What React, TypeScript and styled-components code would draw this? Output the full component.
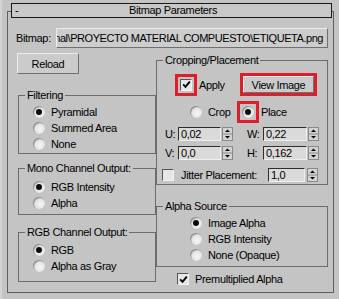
import React from 'react';
import styled, { createGlobalStyle } from 'styled-components';

const colors = {
  panel: '#c4c4c4',
  line: '#6c6c6c',
  frame: '#5e5e5e',
  hi: '#ececec',
  lo: '#707070',
  field: '#dadada',
  red: '#dc1f2b',
};

const GlobalStyle = createGlobalStyle`
  html, body {
    margin: 0;
    padding: 0;
    background: ${colors.panel};
  }
  body {
    font-family: 'Liberation Sans', Arial, sans-serif;
    font-size: 11px;
    letter-spacing: -0.35px;
    color: #000;
  }
  * { box-sizing: border-box; }
`;

const Page = styled.div`
  width: 339px;
  height: 299px;
  padding-left: 5px;
  border-left: 2px solid #d4d4d4;
  overflow: hidden;
`;

const Rollout = styled.div`
  margin-top: 11px;
  width: 327px;
  height: 282px;
  border: 1px solid ${colors.frame};
  display: flex;
  flex-direction: column;
`;

const TitleBar = styled.div`
  margin: -9px 1px 0 3px;
  height: 15px;
  border: 1px solid #1a1a1a;
  background: #c8c8c8;
  display: grid;
  grid-template-columns: 1fr auto 1fr;
  align-items: center;
  padding-left: 3px;
  line-height: 13px;
`;

const Body = styled.div`
  padding-left: 8px;
`;

const BitmapRow = styled.div`
  margin-top: 10px;
  height: 20px;
  display: flex;
  align-items: center;
`;

const RowLabel = styled.span`
  width: 40px;
`;

const PathField = styled.div`
  width: 272px;
  height: 20px;
  background: #cdcdcd;
  border: 1px solid;
  border-color: ${colors.hi} ${colors.lo} ${colors.lo} ${colors.hi};
  display: flex;
  justify-content: flex-end;
  align-items: center;
  padding-right: 4px;
  overflow: hidden;
  white-space: nowrap;
  letter-spacing: -0.45px;
`;

const Columns = styled.div`
  display: flex;
  margin-top: 5px;
`;

const LeftCol = styled.div`
  width: 140px;
  display: flex;
  flex-direction: column;
`;

const RightCol = styled.div`
  width: 172px;
  display: flex;
  flex-direction: column;
`;

const Button = styled.button<{ $w: number; $h: number }>`
  width: ${(p) => p.$w}px;
  height: ${(p) => p.$h}px;
  padding: 0;
  font: inherit;
  letter-spacing: inherit;
  color: #000;
  background: #cbcbcb;
  border: 1px solid;
  border-color: ${colors.hi} ${colors.lo} ${colors.lo} ${colors.hi};
  display: block;
`;

const ReloadButton = styled(Button)`
  margin-left: 1px;
`;

const Group = styled.fieldset<{ $mt: number; $pt: number; $pb: number; $ml?: number }>`
  margin: ${(p) => p.$mt}px 0 0 ${(p) => p.$ml ?? 0}px;
  padding: ${(p) => p.$pt}px 0 ${(p) => p.$pb}px 0;
  border: 1px solid ${colors.line};
  min-width: 0;
`;

const Legend = styled.legend`
  margin-left: 6px;
  padding: 0 2px;
  line-height: 12px;
  font-size: 11px;
`;

const Option = styled.label<{ $indent: number }>`
  display: flex;
  align-items: center;
  gap: 6px;
  height: 16px;
  padding-left: ${(p) => p.$indent}px;
`;

const RadioDot = styled.span<{ $on?: boolean }>`
  position: relative;
  flex: none;
  width: 12px;
  height: 12px;
  border-radius: 50%;
  background: radial-gradient(circle at 60% 60%, #f6f6f6 0%, #e4e4e4 50%, #bdbdbd 100%);
  box-shadow: inset 1px 1px 1px #8a8a8a;
  &::after {
    content: '';
    display: ${(p) => (p.$on ? 'block' : 'none')};
    position: absolute;
    left: 3px;
    top: 3px;
    width: 6px;
    height: 6px;
    border-radius: 50%;
    background: #0a0a0a;
  }
`;

const CheckBox = styled.span`
  flex: none;
  width: 12px;
  height: 12px;
  background: #e6e6e6;
  border: 1px solid;
  border-color: #555 #f2f2f2 #f2f2f2 #555;
  display: flex;
  align-items: center;
  justify-content: center;
`;

const Highlight = styled.div<{ $pad: number }>`
  border: 3px solid ${colors.red};
  padding: ${(p) => p.$pad}px;
  display: flex;
  align-items: center;
  justify-content: center;
  flex: none;
`;

const ApplyRow = styled.div`
  margin-top: 7px;
  height: 23px;
  display: flex;
  align-items: center;
`;

const ApplyMark = styled(Highlight)`
  margin-left: 18px;
`;

const InlineText = styled.span<{ $ml?: number }>`
  margin-left: ${(p) => p.$ml ?? 0}px;
  white-space: nowrap;
`;

const ViewWrap = styled(Highlight)`
  margin-left: auto;
  margin-right: 10px;
`;

const PlaceRow = styled.div`
  margin-top: 5px;
  height: 22px;
  display: flex;
  align-items: center;
`;

const CropItem = styled.div`
  width: 80px;
  padding-left: 33px;
  display: flex;
  align-items: center;
  gap: 6px;
`;

const SpinRow = styled.div<{ $mt: number }>`
  margin-top: ${(p) => p.$mt}px;
  height: 14px;
  display: flex;
  align-items: center;
`;

const SpinLabel = styled.span<{ $w: number; $ml: number }>`
  width: ${(p) => p.$w}px;
  margin-left: ${(p) => p.$ml}px;
`;

const SpinBox = styled.div<{ $gap: number }>`
  display: flex;
  gap: ${(p) => p.$gap}px;
  height: 14px;
`;

const SpinField = styled.div<{ $w: number }>`
  width: ${(p) => p.$w}px;
  height: 14px;
  background: ${colors.field};
  border: 1px solid;
  border-color: #2e2e2e #f0f0f0 #f0f0f0 #2e2e2e;
  padding-left: 2px;
  line-height: 12px;
`;

const Arrows = styled.svg`
  width: 11px;
  height: 14px;
  display: block;
`;

const JitterRow = styled(SpinRow)`
  padding-left: 5px;
`;

const JitterSpin = styled(SpinBox)`
  margin-left: auto;
  margin-right: 9px;
`;

const PremultRow = styled.label`
  margin-top: 4px;
  height: 16px;
  padding-left: 21px;
  display: flex;
  align-items: center;
  gap: 6px;
`;

const Check = () => (
  <svg width="9" height="9" viewBox="0 0 9 9">
    <path d="M1.2 4.4 L3.5 6.8 L7.8 1.6" fill="none" stroke="#000" strokeWidth="1.9" />
  </svg>
);

const ArrowIcon = () => (
  <Arrows viewBox="0 0 11 14">
    <rect x="0.5" y="0.5" width="10" height="13" fill="#d2d2d2" stroke="#8a8a8a" />
    <line x1="1" y1="7" x2="10" y2="7" stroke="#8a8a8a" />
    <path d="M3 5 L5.5 2.5 L8 5 Z" fill="#000" />
    <path d="M3 9 L5.5 11.5 L8 9 Z" fill="#000" />
  </Arrows>
);

const Spinner: React.FC<{ value: string; w: number; gap?: number }> = ({ value, w, gap = 1 }) => (
  <SpinBox $gap={gap}>
    <SpinField $w={w}>{value}</SpinField>
    <ArrowIcon />
  </SpinBox>
);

const Radio: React.FC<{ label: string; on?: boolean; indent: number }> = ({ label, on, indent }) => (
  <Option $indent={indent}>
    <RadioDot $on={on} />
    <span>{label}</span>
  </Option>
);

export default function App() {
  return (
    <Page>
      <GlobalStyle />
      <Rollout>
        <TitleBar>
          <span>-</span>
          <span>Bitmap Parameters</span>
          <span />
        </TitleBar>
        <Body>
          <BitmapRow>
            <RowLabel>Bitmap:</RowLabel>
            <PathField>nal\PROYECTO MATERIAL COMPUESTO\ETIQUETA.png</PathField>
          </BitmapRow>
          <Columns>
            <LeftCol>
              <ReloadButton $w={62} $h={21}>Reload</ReloadButton>
              <Group $mt={15} $pt={3} $pb={1} $ml={2}>
                <Legend>Filtering</Legend>
                <Radio label="Pyramidal" on indent={14} />
                <Radio label="Summed Area" indent={14} />
                <Radio label="None" indent={14} />
              </Group>
              <Group $mt={8} $pt={5} $pb={3} $ml={2}>
                <Legend>Mono Channel Output:</Legend>
                <Radio label="RGB Intensity" on indent={14} />
                <Radio label="Alpha" indent={14} />
              </Group>
              <Group $mt={11} $pt={4} $pb={7} $ml={2}>
                <Legend>RGB Channel Output:</Legend>
                <Radio label="RGB" on indent={14} />
                <Radio label="Alpha as Gray" indent={14} />
              </Group>
            </LeftCol>
            <RightCol>
              <Group $mt={1} $pt={0} $pb={2}>
                <Legend>Cropping/Placement</Legend>
                <ApplyRow>
                  <ApplyMark $pad={2}>
                    <CheckBox>
                      <Check />
                    </CheckBox>
                  </ApplyMark>
                  <InlineText $ml={2}>Apply</InlineText>
                  <ViewWrap $pad={0}>
                    <Button $w={71} $h={17}>View Image</Button>
                  </ViewWrap>
                </ApplyRow>
                <PlaceRow>
                  <CropItem>
                    <RadioDot />
                    <span>Crop</span>
                  </CropItem>
                  <Highlight $pad={2}>
                    <RadioDot $on />
                  </Highlight>
                  <InlineText $ml={2}>Place</InlineText>
                </PlaceRow>
                <SpinRow $mt={4}>
                  <SpinLabel $w={13} $ml={8}>U:</SpinLabel>
                  <Spinner value="0,02" w={43} />
                  <SpinLabel $w={16} $ml={14}>W:</SpinLabel>
                  <Spinner value="0,22" w={44} />
                </SpinRow>
                <SpinRow $mt={5}>
                  <SpinLabel $w={13} $ml={8}>V:</SpinLabel>
                  <Spinner value="0,0" w={43} />
                  <SpinLabel $w={16} $ml={14}>H:</SpinLabel>
                  <Spinner value="0,162" w={44} />
                </SpinRow>
                <JitterRow $mt={8}>
                  <CheckBox />
                  <InlineText $ml={7}>Jitter Placement:</InlineText>
                  <JitterSpin $gap={2}>
                    <SpinField $w={37}>1,0</SpinField>
                    <ArrowIcon />
                  </JitterSpin>
                </JitterRow>
              </Group>
              <Group $mt={15} $pt={3} $pb={3}>
                <Legend>Alpha Source</Legend>
                <Radio label="Image Alpha" on indent={33} />
                <Radio label="RGB Intensity" indent={33} />
                <Radio label="None (Opaque)" indent={33} />
              </Group>
              <PremultRow>
                <CheckBox>
                  <Check />
                </CheckBox>
                <span>Premultiplied Alpha</span>
              </PremultRow>
            </RightCol>
          </Columns>
        </Body>
      </Rollout>
    </Page>
  );
}
